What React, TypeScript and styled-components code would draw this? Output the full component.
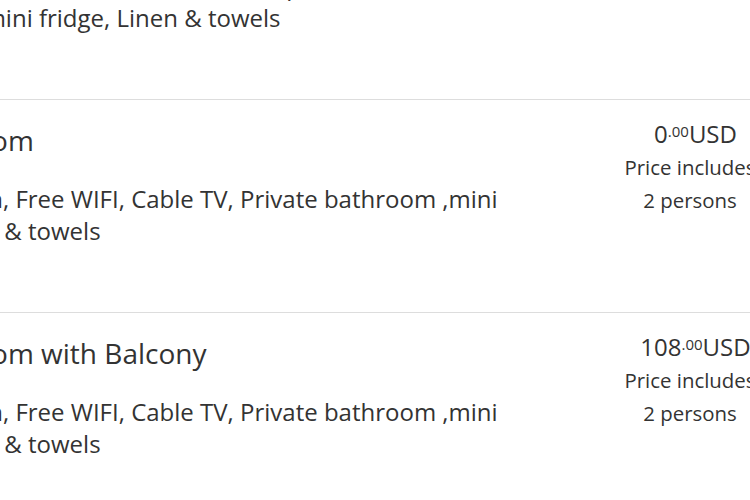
import styled, { createGlobalStyle } from "styled-components";

const GlobalStyle = createGlobalStyle`
  html, body {
    margin: 0;
    padding: 0;
    background: #fff;
    overflow: hidden;
  }

  body {
    font-family: "Open Sans", "Noto Sans", sans-serif;
    color: #333;
  }
`;

// the list is scrolled: the page shows a slice of it
const List = styled.div`
  width: 1000px;
  margin: -113px 0 0 -141px;
`;

const Row = styled.div`
  display: grid;
  grid-template-columns: 684px 132px;
  column-gap: 81px;
  height: 213px;
  box-sizing: border-box;
  padding-top: 22px;
  border-bottom: 1px solid #ddd;
`;

const Info = styled.div`
  display: flex;
  flex-direction: column;
  gap: 25px;
`;

const RoomName = styled.h3`
  margin: 0;
  font-size: 28px;
  font-weight: 400;
  line-height: 36px;
`;

const Amenities = styled.p`
  margin: 0;
  font-size: 24px;
  line-height: 32px;
`;

const PriceBox = styled.div`
  text-align: center;
`;

const Amount = styled.div`
  padding-left: 11px;
  font-size: 24px;
  line-height: 24px;

  sup {
    font-size: 15px;
    vertical-align: 6px;
    line-height: 0;
  }
`;

const Note = styled.div`
  margin-top: 5px;
  font-size: 20.4px;
  line-height: 33px;
`;

type Room = {
  name: string;
  amenities: string;
  whole: string;
  cents: string;
};

const rooms: Room[] = [
  {
    name: "Deluxe Room with Garden View",
    amenities:
      "Air-condition, Free WIFI, Cable TV, Telephone, Private bathroom ,mini fridge, Linen & towels",
    whole: "90",
    cents: "00",
  },
  {
    name: "Deluxe Room",
    amenities:
      "Air-condition, Free WIFI, Cable TV, Private bathroom ,mini fridge, Linen & towels",
    whole: "0",
    cents: "00",
  },
  {
    name: "Deluxe Room with Balcony",
    amenities:
      "Air-condition, Free WIFI, Cable TV, Private bathroom ,mini fridge, Linen & towels",
    whole: "108",
    cents: "00",
  },
];

const App = () => (
  <>
    <GlobalStyle />
    <List>
      {rooms.map((room) => (
        <Row key={room.name}>
          <Info>
            <RoomName>{room.name}</RoomName>
            <Amenities>{room.amenities}</Amenities>
          </Info>
          <PriceBox>
            <Amount>
              {room.whole}
              <sup>.{room.cents}</sup>USD
            </Amount>
            <Note>Price includes 2 persons</Note>
          </PriceBox>
        </Row>
      ))}
    </List>
  </>
);

export default App;
